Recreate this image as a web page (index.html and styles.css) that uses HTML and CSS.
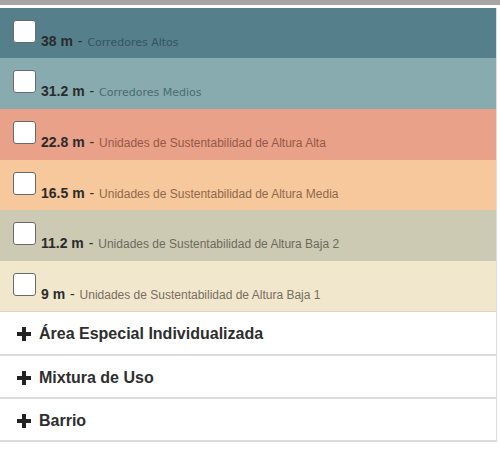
FILE: index.html
```html
<!DOCTYPE html>
<html lang="es">
<head>
<meta charset="utf-8">
<title>Capas</title>
<link rel="stylesheet" href="styles.css">
</head>
<body>
<div class="topbar"></div>
<div class="panel">
  <ul class="layers">
    <li class="layer l1"><span class="check"></span><b>38 m</b> - <span class="desc alt">Corredores Altos</span></li>
    <li class="layer l2"><span class="check"></span><b>31.2 m</b> - <span class="desc alt">Corredores Medios</span></li>
    <li class="layer l3"><span class="check"></span><b>22.8 m</b> - <span class="desc">Unidades de Sustentabilidad de Altura Alta</span></li>
    <li class="layer l4"><span class="check"></span><b>16.5 m</b> - <span class="desc">Unidades de Sustentabilidad de Altura Media</span></li>
    <li class="layer l5"><span class="check"></span><b>11.2 m</b> - <span class="desc">Unidades de Sustentabilidad de Altura Baja 2</span></li>
    <li class="layer l6"><span class="check"></span><b>9 m</b> - <span class="desc">Unidades de Sustentabilidad de Altura Baja 1</span></li>
  </ul>
  <div class="group first"><svg class="plus" viewBox="0 0 14 14" width="14" height="14"><rect x="5" y="0" width="4" height="14"/><rect x="0" y="5" width="14" height="4"/></svg>Área Especial Individualizada</div>
  <div class="group"><svg class="plus" viewBox="0 0 14 14" width="14" height="14"><rect x="5" y="0" width="4" height="14"/><rect x="0" y="5" width="14" height="4"/></svg>Mixtura de Uso</div>
  <div class="group"><svg class="plus" viewBox="0 0 14 14" width="14" height="14"><rect x="5" y="0" width="4" height="14"/><rect x="0" y="5" width="14" height="4"/></svg>Barrio</div>
</div>
</body>
</html>
```
FILE: styles.css
```css
html, body {
  margin: 0;
  padding: 0;
  background: #ffffff;
  font-family: "Liberation Sans", Arial, sans-serif;
  color: #2e2e2e;
}
.topbar {
  height: 5px;
  background: #a8a4a4;
}
.panel {
  width: 496px;
  margin-top: 3px;
  border-right: 1px solid #dcdcdc;
}
.layers {
  list-style: none;
  margin: 0;
  padding: 0;
}
.layer {
  box-sizing: border-box;
  height: 51px;
  padding: 12px 0 0 13px;
  font-size: 14px;
  white-space: nowrap;
  color: #2e2e2e;
  word-spacing: 1px;
}
.layer.l1, .layer.l4 { height: 50px; }
.layer b {
  font-weight: bold;
  color: #2b2b2b;
  word-spacing: 0;
}
.check {
  display: inline-block;
  box-sizing: border-box;
  width: 23px;
  height: 23px;
  margin: 0 5px 3px 0;
  background: #ffffff;
  border: 1px solid #6a6a6a;
  border-radius: 3px;
  vertical-align: baseline;
}
.desc {
  font-size: 12px;
  color: rgba(0, 0, 0, 0.45);
  word-spacing: 0;
}
.desc.alt {
  font-family: "DejaVu Sans", "Liberation Sans", sans-serif;
  font-size: 11px;
}
.l1 { background: #557f8b; }
.l2 { background: #87abaf; }
.l3 { background: #e9a189; }
.l4 { background: #f6c89b; }
.l5 { background: #cdcab4; }
.l6 { background: #f1e7cd; border-bottom: 1px solid #ddd6c2; }
.l1 .desc { color: #35545f; }
.l2 .desc { color: #4a6b71; }
.l3 .desc { color: #95584a; }
.l4 .desc { color: #8d6a4c; }
.l5 .desc { color: #6c6a5c; }
.l6 .desc { color: #786e5e; }
.group {
  box-sizing: border-box;
  display: flex;
  align-items: center;
  height: 41px;
  padding: 2px 0 0 17px;
  border-bottom: 2px solid #dcdcdc;
  font-size: 16px;
  font-weight: bold;
  color: #2e2e2e;
}
.group { height: 43px; }
.group.first { height: 44px; }
.plus {
  flex: none;
  margin-right: 8px;
  fill: #222222;
}
```
